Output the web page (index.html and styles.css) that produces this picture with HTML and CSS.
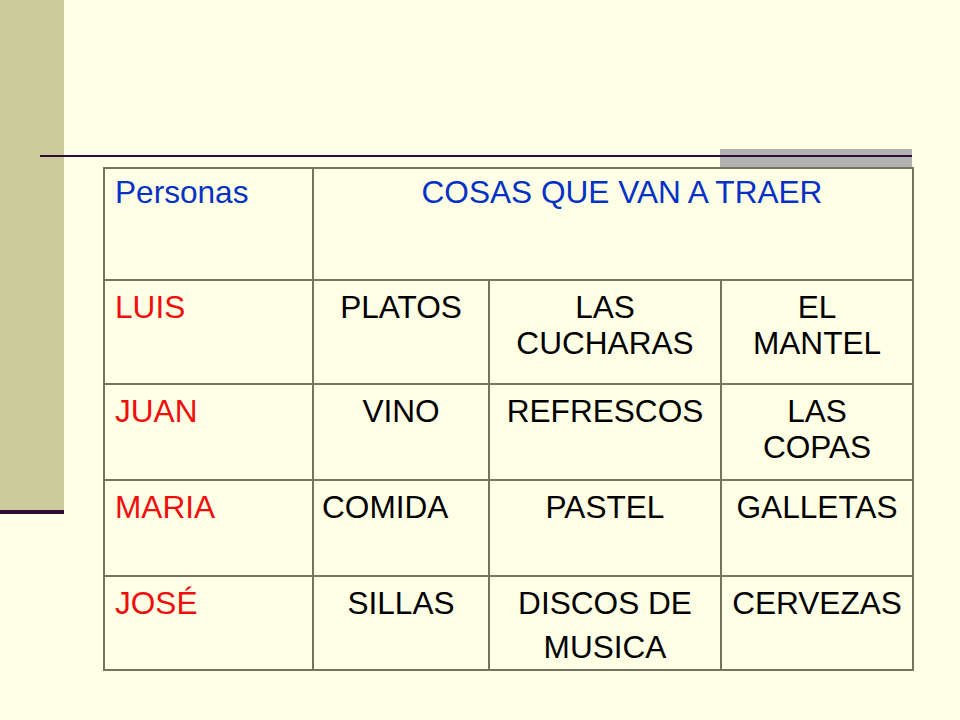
FILE: index.html
```html
<!DOCTYPE html>
<html lang="es">
<head>
<meta charset="utf-8">
<title>Cosas que van a traer</title>
<link rel="stylesheet" href="styles.css">
</head>
<body>
<div class="slide">
  <div class="sidebar"></div>
  <div class="title-rule">
    <div class="rule-box"></div>
  </div>
  <table class="grid">
    <colgroup>
      <col class="c1"><col class="c2"><col class="c3"><col class="c4">
    </colgroup>
    <tr class="r-head">
      <td class="name blue">Personas</td>
      <td class="center blue head-span" colspan="3">COSAS QUE VAN A TRAER</td>
    </tr>
    <tr class="r-luis">
      <td class="name red">LUIS</td>
      <td class="center">PLATOS</td>
      <td class="center">LAS<br>CUCHARAS</td>
      <td class="center">EL<br>MANTEL</td>
    </tr>
    <tr class="r-juan">
      <td class="name red">JUAN</td>
      <td class="center">VINO</td>
      <td class="center">REFRESCOS</td>
      <td class="center">LAS<br>COPAS</td>
    </tr>
    <tr class="r-maria">
      <td class="name red">MARIA</td>
      <td class="left">COMIDA</td>
      <td class="center">PASTEL</td>
      <td class="center">GALLETAS</td>
    </tr>
    <tr class="r-jose">
      <td class="name red">JOSÉ</td>
      <td class="center">SILLAS</td>
      <td class="center wide">DISCOS DE<br>MUSICA</td>
      <td class="center">CERVEZAS</td>
    </tr>
  </table>
</div>
</body>
</html>
```

FILE: styles.css
```css
html, body {
  margin: 0;
  padding: 0;
  background: #FFFFE5;
}

.slide {
  position: relative;
  width: 960px;
  height: 720px;
  background: #FFFFE5;
  font-family: "Liberation Sans", Arial, sans-serif;
  overflow: hidden;
}

.sidebar {
  position: absolute;
  left: 0;
  top: 0;
  width: 64px;
  height: 510px;
  background: #CCCC9A;
  border-bottom: 4px solid #2E0B38;
}

.title-rule {
  position: relative;
  margin-left: 40px;
  width: 872px;
  padding-top: 149px;
  display: flex;
  justify-content: flex-end;
}

.title-rule::before {
  content: "";
  position: absolute;
  left: 0;
  right: 0;
  top: 155px;
  height: 2px;
  background: #2E0B38;
  z-index: 1;
}

.rule-box {
  width: 192px;
  height: 18px;
  background: #B2B2B2;
}

.grid {
  margin-left: 103px;
  border-collapse: collapse;
  table-layout: fixed;
  width: 809px;
  font-size: 31.6px;
  line-height: 36px;
  color: #000;
}

.c1 { width: 209px; }
.c2 { width: 176px; }
.c3 { width: 232px; }
.c4 { width: 192px; }

.grid td {
  border: 2px solid #74745A;
  vertical-align: top;
  padding: 8px 6px 0 6px;
}

.r-head { height: 112px; }
.r-head td { padding-top: 5px; }
.r-luis { height: 104px; }
.r-juan { height: 96px; }
.r-maria { height: 96px; }
.r-jose { height: 94px; }

.grid td.name {
  text-align: left;
  padding-left: 10px;
}

.grid td.head-span {
  padding-left: 24px;
}

.center { text-align: center; }

.grid td.left {
  text-align: left;
  padding-left: 8px;
}

.grid td.wide {
  line-height: 44px;
  padding-top: 4px;
}

.blue { color: #0532C4; }
.red { color: #EE0E0E; }
```
